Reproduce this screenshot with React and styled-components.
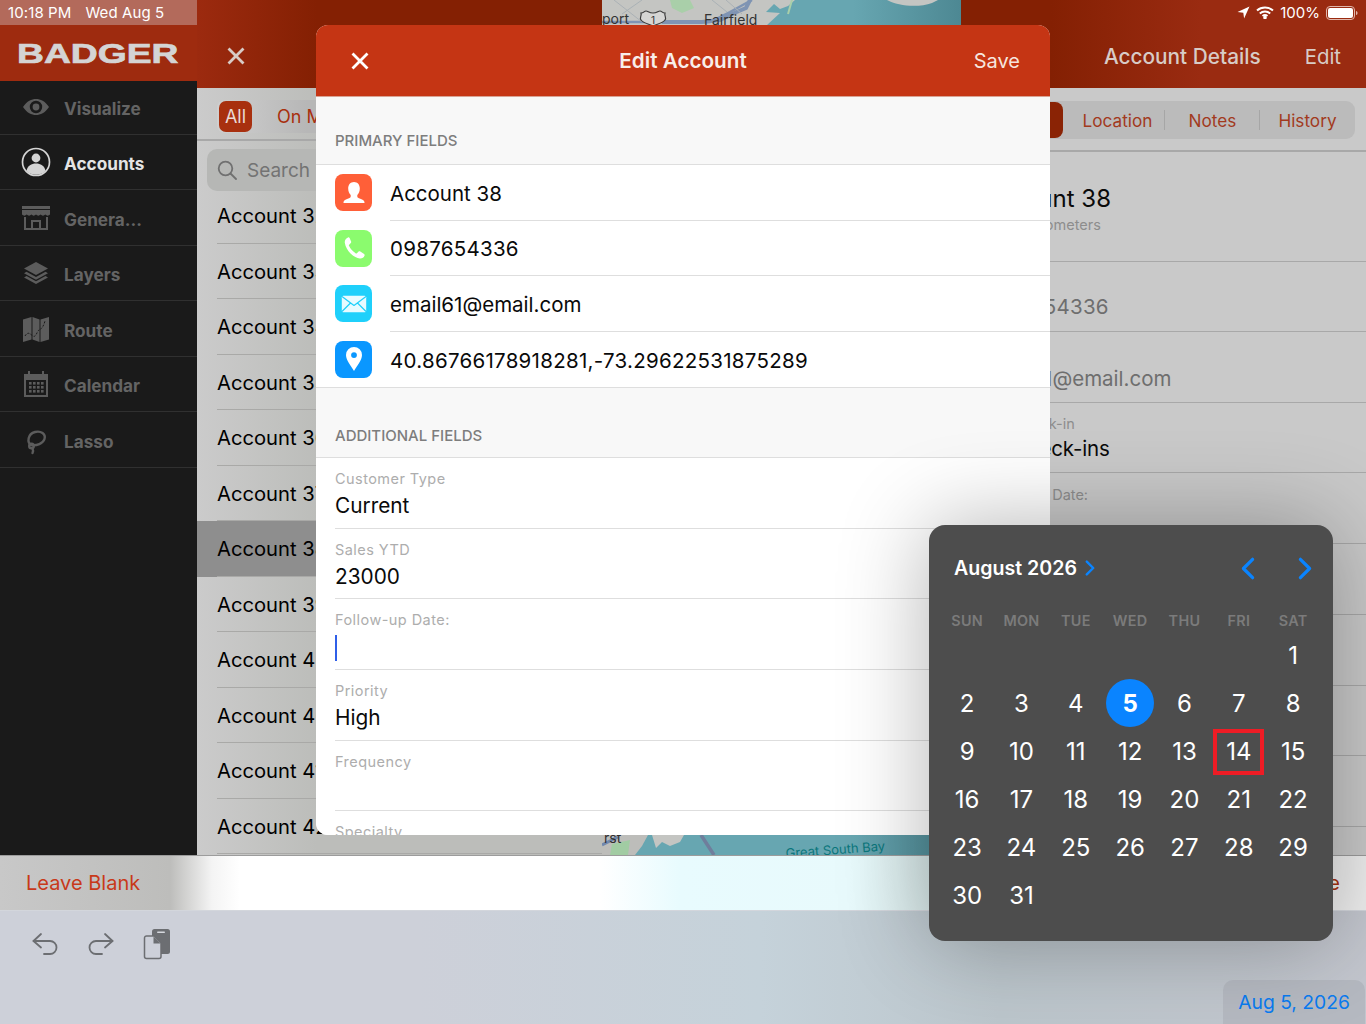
import React from "react";
import styled, { createGlobalStyle } from "styled-components";

const Global = createGlobalStyle`
  html, body { margin: 0; padding: 0; background: #cdd0d9; }
  * { box-sizing: border-box; }
  body { font-family: Inter, "Noto Sans", "Liberation Sans", sans-serif; -webkit-font-smoothing: antialiased; }
`;

const Page = styled.div`
  position: relative; width: 1366px; height: 1024px; overflow: hidden;
  display: flex; flex-direction: column;
`;
const TopRow = styled.div`display: flex; height: 855px; flex: none;`;

/* Sidebar */
const Sidebar = styled.aside`
  width: 197px; flex: none; background: #1a1a1a; display: flex; flex-direction: column;
`;
const StatusTint = styled.div`
  height: 25px; background: #b36a5b; color: #fff; font-size: 15px; letter-spacing: .1px;
  display: flex; align-items: center; padding-left: 8px; gap: 14px; white-space: nowrap;
`;
const LogoBar = styled.div`
  height: 56px; background: #9e2b0f; display: flex; align-items: center; justify-content: flex-start; padding-left: 17px;
  position: relative; z-index: 1; margin-bottom: -1.8px;
`;
const Logo = styled.span`
  display: inline-block; font-family: "Liberation Sans", Arial, sans-serif; font-weight: 700;
  font-size: 28px; line-height: 1; color: #d4d4d4; transform: scaleX(1.33); transform-origin: left center;
  -webkit-text-stroke: .7px #d4d4d4; margin-top: 2px;
`;
const SideItem = styled.div`
  height: 55.5px; display: flex; align-items: center; padding: 4px 0 0 21px; gap: 13px;
  border-bottom: 1px solid #303030;
  color: ${p => (p.$active ? "#e4e4e4" : "#646464")};
  font-size: 17.2px; font-weight: 700;
`;
const SideIcon = styled.svg`width: 30px; height: 30px; flex: none; margin-top: -3px;`;

/* Shared nav */
const ListCol = styled.section`width: 405px; flex: none; display: flex; flex-direction: column; background: linear-gradient(to right, #cbcbcb 0, #bcbdba 120px);`;
const DetailCol = styled.section`width: 405px; flex: none; display: flex; flex-direction: column; background: #c9c9c9;`;
const Nav = styled.div`
  height: 88px; flex: none; display: flex; flex-direction: column;
  background: ${p => p.$bg};
`;
const StatusRow = styled.div`
  height: 25px; display: flex; align-items: center; justify-content: flex-end;
  padding-right: 8px; gap: 6px; color: #fff; font-size: 15px;
`;
const TitleRow = styled.div`
  flex: 1; display: flex; align-items: center; color: #d8cbc6; font-size: 20.8px; font-weight: 500;
  padding: 0 25px 1px 29px;
  justify-content: ${p => (p.$end ? "flex-end" : "flex-start")};
  gap: 44px;
`;
const EditLink = styled.span`font-weight: 400; font-size: 20.4px;`;
const CloseBtn = styled.svg`width: 20px; height: 20px; flex: none;`;

/* List column */
const SegBand = styled.div`
  height: 53px; flex: none; border-bottom: 2px solid #a8a8a8; padding: 12px 0 0 20px;
`;
const ListSeg = styled.div`
  height: 33px; display: flex; align-items: center; gap: 25px; padding-left: 2px;
  background: linear-gradient(to right, #cfcfcf, #b7b7b7 90px); border-radius: 8px;
`;
const AllPill = styled.span`
  width: 33px; height: 31px; background: #a8300f; color: #ead9d4; border-radius: 7px; font-size: 18px;
  display: flex; align-items: center; justify-content: center;
`;
const SegText = styled.span`color: #a8300f; font-size: 18px; white-space: nowrap;`;
const Search = styled.div`
  height: 42px; margin: 8px 0 -3px 10px; background: #b6b7b5; border-radius: 10px; flex: none;
  display: flex; align-items: center; gap: 10px; padding-left: 10px; color: #737373; font-size: 19px; position: relative;
`;
const ListRow = styled.div`
  height: 55.5px; flex: none; padding-left: 20px; position: relative;
  background: ${p => (p.$selected ? "#8e8e8e" : "transparent")};
`;
const ListRowInner = styled.div`
  height: 100%; display: flex; align-items: center; border-bottom: 1px solid #a9a9a7; padding-top: 1px;
  color: #000; font-size: 20.2px; white-space: nowrap;
`;

/* Map */
const MapCol = styled.div`width: 359px; flex: none; background: #5f9faa;`;
const MapSvg = styled.svg`display: block; width: 359px; height: 855px;`;

/* Detail column */
const DetailSegBand = styled.div`
  height: 64px; flex: none; border-bottom: 2px solid #a8a8a8; padding: 13px 11px 0 14px;
`;
const DetailSeg = styled.div`
  height: 38px; display: flex; background: #bbbbbb; border-radius: 9px;
`;
const DetailSegItem = styled.div`
  width: 95px; flex: none; display: flex; align-items: center; justify-content: ${p => (p.$sel ? "flex-start" : "center")}; position: relative;
  font-size: 17.2px; color: ${p => (p.$sel ? "#e0c9c2" : "#a23a1e")};
`;
const DetailSelPill = styled.span`
  width: 88px; height: 36px; background: #8a2305; border-radius: 8px;
  display: flex; align-items: center; justify-content: center;
`;
const SegDivider = styled.span`
  position: absolute; right: 0; top: 9px; width: 1px; height: 20px; background: #a6a6a6;
`;
const DetailBody = styled.div`display: flex; flex-direction: column; flex: 1;`;
const DetailRow = styled.div`
  height: ${p => p.$h}px; flex: none; padding-left: 19px; border-bottom: 1px solid #a8a8a8;
  display: flex; flex-direction: column; justify-content: flex-start;
  padding-top: ${p => p.$pt || 0}px; white-space: nowrap;
`;
const DetailTitle = styled.div`font-size: 24px; color: #0a0a0a; line-height: 30px;`;
const DetailSub = styled.div`font-size: 14.5px; color: #8d8d8d; line-height: 18px; margin-top: ${p => p.$mt || 0}px;`;
const DetailValue = styled.div`
  font-size: 20.5px; line-height: 28px; margin-top: ${p => p.$mt || 0}px;
  letter-spacing: ${p => (p.$num ? ".28px" : p.$dark ? "-.2px" : "0")};
  color: ${p => (p.$dark ? "#0a0a0a" : "#6e6e6e")};
`;

/* Bottom */
const AccessoryBar = styled.div`
  height: 55px; flex: none; display: flex; align-items: center; justify-content: space-between; padding: 0 26px;
  background: linear-gradient(to right, #c8c8c8 0, #bdbdbb 170px, #f4f4f4 212px, #fff 240px, #fff 600px, #e8fbfe 680px, #e8fafc 850px, #d8e8e8 930px, #eeeeee 1340px);
  border-top: 1px solid #9c9c9c; font-size: 20px; color: #c8391a;
`;
const EndAction = styled.span`color: #a8300f;`;
const KeyTray = styled.div`
  flex: 1; display: flex; flex-direction: column;
  background: linear-gradient(to right, #cdd0d9 0, #cdd0d9 420px, #c5d2da 760px, #bcc6cc 1000px, #c3c6ce 1366px);
  border-top: 1px solid #d3d6dc;
`;
const Tools = styled.div`display: flex; align-items: center; gap: 28px; padding: 17px 0 0 31px;`;
const ToolIcon = styled.svg`display: block; flex: none;`;
const DatePill = styled.div`
  margin-top: auto; align-self: flex-end; width: 142px; height: 44px; margin-right: 1px;
  background: #b5b9c1; border-radius: 10px 10px 0 0; color: #0a7bf0; font-size: 19.3px;
  display: flex; align-items: center; justify-content: flex-end; padding-right: 15px;
`;

/* Modal */
const Modal = styled.div`
  position: absolute; left: 316px; top: 25px; width: 734px; height: 810px;
  border-radius: 12px; overflow: hidden; background: #f8f8f8; display: flex; flex-direction: column;
`;
const ModalNav = styled.div`
  height: 72px; flex: none; background: #c53514; display: flex; align-items: center; justify-content: space-between;
  padding: 0 30px 0 34px; color: #fff; position: relative; font-size: 20px; border-bottom: 1px solid #d9a394;
`;
const ModalTitle = styled.div`
  position: absolute; left: 0; right: 0; text-align: center; font-weight: 600; font-size: 20.7px; color: #f8eeea;
`;
const SaveText = styled.span`color: #f6e5df;`;
const SectionHead = styled.div`
  height: ${p => p.$h}px; flex: none; display: flex; align-items: flex-end; padding: 0 0 ${p => p.$pb}px 19px;
  color: #7d7d7d; font-size: 15px; font-weight: 500; border-bottom: 1px solid #dedede; line-height: 18px;
`;
const WhiteGroup = styled.div`background: #fff; border-bottom: ${p => p.$b ? "1px solid #dedede" : "none"}; flex: none;`;
const PrimaryRow = styled.div`
  height: 55.5px; display: flex; align-items: center; padding-left: 19px; gap: 18px;
`;
const IconTile = styled.div`
  width: 37px; height: 37px; flex: none; border-radius: 8px; background: ${p => p.$c};
  display: flex; align-items: center; justify-content: center;
`;
const PrimaryText = styled.div`
  flex: 1; height: 100%; display: flex; align-items: center; font-size: 20.5px; color: #0a0a0a; padding-top: 2px;
  letter-spacing: ${p => (p.$num ? ".28px" : "0")};
  border-bottom: ${p => (p.$last ? "none" : "1px solid #dedede")};
`;
const FormRow = styled.div`
  height: 70.7px; margin-left: 19px; border-bottom: 1px solid #dedede; padding-top: 12px;
`;
const FormLabel = styled.div`font-size: 14.5px; line-height: 18px; color: #adadad; letter-spacing: .45px;`;
const FormValue = styled.div`font-size: 20.8px; line-height: 28px; height: 28px; margin-top: 4px; color: #0a0a0a; display: flex; align-items: center;`;
const Caret = styled.span`display: block; width: 2px; height: 26px; background: #2f5fe8; margin-top: 2px;`;

/* Calendar */
const Popover = styled.div`
  position: absolute; left: 929px; top: 525px; width: 404px; height: 416px; border-radius: 16px;
  background: #4d4d4d; color: #fff; box-shadow: 0 0 90px rgba(0,0,0,.3);
  padding: 27px 11px 0;
`;
const CalHead = styled.div`
  height: 32px; display: flex; align-items: center; padding: 0 10px 0 14px; font-size: 19.6px; font-weight: 600; gap: 8px;
`;
const CalArrows = styled.div`margin-left: auto; display: flex; gap: 43px; align-items: center;`;
const Chevron = styled.svg`display: block; flex: none;`;
const WeekRow = styled.div`
  display: grid; grid-template-columns: repeat(7, 54.33px); margin-top: 27px; height: 20px;
  color: #7b7b7b; font-size: 14.4px; font-weight: 600; text-align: center; line-height: 20px; letter-spacing: .3px;
`;
const DaysGrid = styled.div`
  display: grid; grid-template-columns: repeat(7, 54.33px); grid-auto-rows: 48px; margin-top: 0;
`;
const DayCell = styled.div`
  display: flex; align-items: center; justify-content: center; font-size: 24px; position: relative;
  font-weight: ${p => (p.$today ? 700 : 400)};
`;
const TodayDisc = styled.span`
  width: 48px; height: 48px; border-radius: 50%; background: #0a84ff; display: flex; align-items: center; justify-content: center;
`;
const MarkBox = styled.span`
  position: absolute; left: 1px; top: 2px; width: 51px; height: 46px; border: 4px solid #ee1c25;
`;

const Sw = ({ children }) => (
  <SideIcon viewBox="0 0 30 30" fill="#5c5c5c">{children}</SideIcon>
);

const icons = {
  eye: (
    <Sw>
      <path fillRule="evenodd" d="M2 15C6 9 10.500 7 15 7s9 2 13 8c-4 6-8.500 8-13 8S6 21 2 15Zm13-6.200a6.200 6.200 0 1 0 0 12.400 6.200 6.200 0 0 0 0-12.400Z" />
      <circle cx="15" cy="15" r="3.400" />
    </Sw>
  ),
  person: (
    <SideIcon viewBox="0 0 30 30">
      <circle cx="15" cy="15" r="13.500" fill="none" stroke="#d4d4d4" strokeWidth="1.700" />
      <circle cx="15" cy="11" r="4.400" fill="#d4d4d4" />
      <path d="M5.500 24c1-5.500 5-7.500 9.500-7.500s8.500 2 9.500 7.500c-2.500 2.500-6 3.700-9.500 3.700S8 26.500 5.500 24Z" fill="#d4d4d4" />
    </SideIcon>
  ),
  store: (
    <Sw>
      <rect x="1" y="3" width="28" height="3" />
      <path d="M1 7h28v4.500c-1.500 1.500-3.200 1.500-4.700 0-1.500 1.500-3.200 1.500-4.700 0-1.500 1.500-3.100 1.500-4.600 0-1.500 1.500-3.100 1.500-4.600 0-1.500 1.500-3.200 1.500-4.700 0-1.500 1.500-3.200 1.500-4.700 0Z" />
      <path fillRule="evenodd" d="M3 14h2v11h5v-8h10v8h5V14h2v13H3Zm9 5v6h6v-6Z" />
    </Sw>
  ),
  layers: (
    <Sw>
      <path d="M15 4 27 10.500 15 17 3 10.500Z" />
      <path d="M5.500 13.800 3 15.200 15 21.700 27 15.200 24.500 13.800 15 19Z" />
      <path d="M5.500 18 3 19.400 15 26 27 19.400 24.500 18 15 23.200Z" />
    </Sw>
  ),
  route: (
    <Sw>
      <path d="M2 5.500 10.500 3v22.500L2 28Z" />
      <path d="M11.500 3 18.500 5.500v22.500l-7-2.500Z" />
      <path d="M19.500 5.500 28 3v22.500L19.500 28Z" />
      <path d="M4 22c3-5 5-2 8 0s4-5 6-6 4-2 6-9" fill="none" stroke="#1a1a1a" strokeWidth="1" strokeDasharray="2 1.500" />
    </Sw>
  ),
  calendar: (
    <Sw>
      <path fillRule="evenodd" d="M3 5h4V2h2v3h12V2h2v3h4v23H3Zm2 6v15h20V11Z" />
      {[0, 1, 2, 3].flatMap(c => [0, 1, 2].map(r => (
        <rect key={`${c}${r}`} x={8 + c * 4} y={13 + r * 4} width="2.600" height="2.600" />
      )))}
    </Sw>
  ),
  lasso: (
    <SideIcon viewBox="0 0 30 30" fill="none" stroke="#5c5c5c" strokeWidth="2.400" strokeLinecap="round">
      <path d="M10 20C6 17.500 6.500 9 14 7c6-1.500 11 2 9.500 7-1.300 4.500-8 7-13.500 6" />
      <circle cx="10.500" cy="21" r="2.300" />
      <path d="M11.500 23.500c1 2 .5 3.500 0 4.500" />
    </SideIcon>
  ),
};

const sideItems = [
  ["Visualize", "eye"], ["Accounts", "person", true], ["Genera...", "store"], ["Layers", "layers"],
  ["Route", "route"], ["Calendar", "calendar"], ["Lasso", "lasso"],
];
const accounts = ["32", "33", "34", "35", "36", "37", "38", "39", "4", "40", "41", "42"];
const weekdays = ["SUN", "MON", "TUE", "WED", "THU", "FRI", "SAT"];
const days = Array.from({ length: 31 }, (_, i) => i + 1);

const X = ({ c }) => (
  <CloseBtn viewBox="0 0 20 20" fill="none" stroke={c} strokeWidth="2.800" strokeLinecap="square">
    <path d="M3.500 3.500 16.500 16.500M16.500 3.500 3.500 16.500" />
  </CloseBtn>
);

const Chev = ({ dir, w, h, sw }) => (
  <Chevron width={w} height={h} viewBox="0 0 12 20" fill="none" stroke="#0a84ff" strokeWidth={sw} strokeLinecap="round" strokeLinejoin="round">
    <path d={dir === "l" ? "M10 2 2 10l8 8" : "M2 2l8 8-8 8"} />
  </Chevron>
);

const MapArt = () => (
  <MapSvg viewBox="0 0 359 855">
    <defs>
      <linearGradient id="edge" x1="0" x2="1" y1="0" y2="0">
        <stop offset="0" stopColor="#67a6b1" />
        <stop offset=".7" stopColor="#67a6b1" />
        <stop offset="1" stopColor="#4d8893" />
      </linearGradient>
    </defs>
    <rect width="359" height="855" fill="url(#edge)" />
    {/* north shore */}
    <path d="M0 0H193L186 6 178 9 172 4 164 12 178 13 165 25H0Z" fill="#c4c5c2" />
    <path d="M68 0H88L92 8 80 13 70 8Z" fill="#a9cfa9" />
    <path d="M148 0 144 8 130 14 118 20 100 22 60 22" fill="none" stroke="#7f94b3" strokeWidth="4" />
    <path d="M0 22H108L128 12 150 0" fill="none" stroke="#7f94b3" strokeWidth="2.500" />
    <path d="M12 0 40 22M40 0 20 14M110 0 125 12M124 0 140 14" fill="none" stroke="#aab1b5" strokeWidth="1" />
    <path d="M190 0 186 14" stroke="#a9cfa9" strokeWidth="2" />
    <path d="M285 0C296 6 316 8 330 3 L336 0Z" fill="#c4c5c2" />
    <path d="M39 20c-2-2 1-4 0-7 3 0 3-2 5-2s3 2 7 2 5-2 7-2 2 2 5 2c-1 3 2 5 0 7-2 3-8 4-12 6-4-2-10-3-12-6Z" fill="#d6d6d4" stroke="#3c3c3c" strokeWidth="1.200" />
    <text x="51" y="24" fontSize="10" fontFamily="Inter, sans-serif" fill="#333" textAnchor="middle">1</text>
    <text x="0" y="24" fontSize="14" fontFamily="Inter, sans-serif" fill="#333">port</text>
    <text x="102" y="25" fontSize="14" fontFamily="Inter, sans-serif" fill="#333">Fairfield</text>
    {/* south shore */}
    <path d="M0 835H46L40 846 33 855H0Z" fill="#bdbdba" />
    <path d="M10 844 28 840 26 855H8Z" fill="#a1cca3" />
    <path d="M50 835 H82 L78 842 68 846 60 842 54 848Z" fill="#c4c5c2" />
    <path d="M0 845 16 837" stroke="#6f87ad" strokeWidth="3" />
    <path d="M99 835 112 855" stroke="#6f7e9c" strokeWidth="3.500" />
    <text x="2" y="843" fontSize="14" fontFamily="Inter, sans-serif" fill="#2f2f2f">rst</text>
    <text x="184" y="858" fontSize="13" fontFamily="Inter, sans-serif" fill="#0b767c" transform="rotate(-4.300 184 858)">Great South Bay</text>
  </MapSvg>
);

export default function App() {
  return (
    <Page>
      <Global />
      <TopRow>
        <Sidebar>
          <StatusTint><span>10:18 PM</span><span>Wed Aug 5</span></StatusTint>
          <LogoBar><Logo>BADGER</Logo></LogoBar>
          {sideItems.map(([label, ic, active]) => (
            <SideItem key={label} $active={active}>{icons[ic]}<span>{label}</span></SideItem>
          ))}
        </Sidebar>

        <ListCol>
          <Nav $bg="linear-gradient(to right, #9c2a0f 0, #842003 120px)">
            <StatusRow />
            <TitleRow><X c="#d8cbc6" /></TitleRow>
          </Nav>
          <SegBand>
            <ListSeg><AllPill>All</AllPill><SegText>On Map</SegText></ListSeg>
          </SegBand>
          <Search>
            <svg width="20" height="20" viewBox="0 0 20 20" fill="none" stroke="#707070" strokeWidth="1.800" strokeLinecap="round">
              <circle cx="8.500" cy="8.500" r="6.800" /><path d="M13.500 13.500 19 19" />
            </svg>
            <span>Search</span>
          </Search>
          {accounts.map(n => (
            <ListRow key={n} $selected={n === "38"}>
              <ListRowInner>Account {n}</ListRowInner>
            </ListRow>
          ))}
        </ListCol>

        <MapCol><MapArt /></MapCol>

        <DetailCol>
          <Nav $bg="linear-gradient(to right, #842003 0, #842003 90px, #9a2b11 240px)">
            <StatusRow>
              <svg width="13" height="13" viewBox="0 0 13 13" fill="#fff"><path d="M12.500.500 .500 6l5.800.8.800 5.700Z" /></svg>
              <svg width="18" height="13" viewBox="0 0 18 13" fill="none" stroke="#fff" strokeWidth="2">
                <path d="M1 4.500C5.500.500 12.500.500 17 4.500" /><path d="M3.800 7.400c3-2.600 7.400-2.600 10.400 0" /><path d="M6.500 10c1.500-1.200 3.500-1.200 5 0" />
                <circle cx="9" cy="11.500" r=".8" fill="#fff" />
              </svg>
              <span>100%</span>
              <svg width="32" height="14" viewBox="0 0 32 14">
                <rect x=".5" y=".5" width="28" height="13" rx="3.500" fill="none" stroke="#e0b6ab" />
                <rect x="2" y="2" width="25" height="10" rx="2" fill="#fff" />
                <path d="M30 5v4c1 0 1.500-1 1.500-2s-.5-2-1.500-2Z" fill="#e0b6ab" />
              </svg>
            </StatusRow>
            <TitleRow $end><span>Account Details</span><EditLink>Edit</EditLink></TitleRow>
          </Nav>
          <DetailSegBand>
            <DetailSeg>
              <DetailSegItem $sel><DetailSelPill>Details</DetailSelPill></DetailSegItem>
              <DetailSegItem>Location<SegDivider /></DetailSegItem>
              <DetailSegItem>Notes<SegDivider /></DetailSegItem>
              <DetailSegItem>History</DetailSegItem>
            </DetailSeg>
          </DetailSegBand>
          <DetailBody>
            <DetailRow $h={109.5} $pt={32}>
              <DetailTitle>Account 38</DetailTitle>
              <DetailSub $mt={2}>123.45 kilometers</DetailSub>
            </DetailRow>
            <DetailRow $h={70} $pt={31}><DetailValue $num>0987654336</DetailValue></DetailRow>
            <DetailRow $h={71} $pt={33}><DetailValue>email61@email.com</DetailValue></DetailRow>
            <DetailRow $h={70} $pt={12}>
              <DetailSub>Last Check-in</DetailSub>
              <DetailValue $dark $mt={2}>No Check-ins</DetailValue>
            </DetailRow>
            <DetailRow $h={71} $pt={13}><DetailSub>Follow-up Date:</DetailSub></DetailRow>
            <DetailRow $h={71} />
            <DetailRow $h={71} />
            <DetailRow $h={70} />
            <DetailRow $h={71} />
          </DetailBody>
        </DetailCol>
      </TopRow>

      <AccessoryBar><span>Leave Blank</span><EndAction>Done</EndAction></AccessoryBar>
      <KeyTray>
        <Tools>
          <ToolIcon width="28" height="28" viewBox="0 0 28 28" fill="none" stroke="#6c6e72" strokeWidth="1.800" strokeLinecap="round" strokeLinejoin="round">
            <path d="M10 4 2.500 11l7.500 6.500" /><path d="M2.500 11H19a6.500 6.500 0 0 1 0 13h-6" />
          </ToolIcon>
          <ToolIcon width="28" height="28" viewBox="0 0 28 28" fill="none" stroke="#6c6e72" strokeWidth="1.800" strokeLinecap="round" strokeLinejoin="round">
            <path d="M18 4l7.500 7L18 17.500" /><path d="M25.500 11H9a6.500 6.500 0 0 0 0 13h6" />
          </ToolIcon>
          <ToolIcon width="28" height="32" viewBox="0 0 28 32">
            <rect x="9" y="1" width="18" height="25" rx="2.500" fill="#6c6e72" />
            <rect x="14" y="3.500" width="8" height="1.600" rx=".8" fill="#d6d8de" />
            <path d="M3.500 8H11l7 7v13.500a2 2 0 0 1-2 2H3.500a2 2 0 0 1-2-2V10a2 2 0 0 1 2-2Z" fill="#cdd0d9" stroke="#6c6e72" strokeWidth="1.500" />
            <path d="M10.500 8.500v7h7Z" fill="#6c6e72" />
          </ToolIcon>
        </Tools>
        <DatePill>Aug 5, 2026</DatePill>
      </KeyTray>

      <Modal>
        <ModalNav>
          <X c="#fff" />
          <ModalTitle>Edit Account</ModalTitle>
          <SaveText>Save</SaveText>
        </ModalNav>
        <SectionHead $h={68} $pb={14}>PRIMARY FIELDS</SectionHead>
        <WhiteGroup $b>
          <PrimaryRow>
            <IconTile $c="#ff5f38">
              <svg width="28" height="28" viewBox="0 0 28 28" fill="#fff">
                <path d="M14 3c3.600 0 5.800 2.800 5.800 6.500 0 2.700-1 5-2.500 6.400v1.500c0 1 1 1.700 3 2.400 2.600 1 4.200 2 4.200 3.700v.5H3.500v-.5c0-1.700 1.600-2.700 4.200-3.700 2-.7 3-1.400 3-2.400v-1.500C9.200 14.500 8.200 12.200 8.200 9.500 8.200 5.800 10.400 3 14 3Z" />
              </svg>
            </IconTile>
            <PrimaryText>Account 38</PrimaryText>
          </PrimaryRow>
          <PrimaryRow>
            <IconTile $c="#8bfb6e">
              <svg width="28" height="28" viewBox="0 0 28 28" fill="#fff">
                <path d="M8 3.500c-2 .8-3.500 2.700-3.200 5.200.5 4 3 8 5.700 10.800 2.800 2.700 6.300 4.800 9.300 5 2.300.2 3.900-1 4.700-2.800.3-.6.100-1.200-.4-1.600l-3.800-2.700c-.6-.4-1.200-.3-1.700.2l-1.700 1.700c-.3.300-.7.300-1 .1-1.500-.9-3-2.200-4.100-3.400-1.100-1.200-2.200-2.900-2.800-4.300-.2-.4-.1-.8.200-1l1.600-1.600c.5-.5.6-1.200.2-1.800L9.600 4c-.4-.6-1-.8-1.600-.5Z" />
              </svg>
            </IconTile>
            <PrimaryText $num>0987654336</PrimaryText>
          </PrimaryRow>
          <PrimaryRow>
            <IconTile $c="#1fd0fb">
              <svg width="26" height="18" viewBox="0 0 26 18" fill="none" stroke="#fff" strokeWidth="1.200" strokeLinejoin="round">
                <rect x=".8" y=".8" width="24.400" height="16.400" rx="1.500" fill="#e8fbff" stroke="none" />
                <path d="M1 1.500 13 10.500 25 1.500M1 16.500 9.500 8M25 16.500 16.500 8" stroke="#1fd0fb" />
              </svg>
            </IconTile>
            <PrimaryText>email61@email.com</PrimaryText>
          </PrimaryRow>
          <PrimaryRow>
            <IconTile $c="#0a97ff">
              <svg width="18" height="26" viewBox="0 0 18 26">
                <path fillRule="evenodd" d="M9 1a8 8 0 0 1 8 8c0 5.200-5 11-8 16-3-5-8-10.800-8-16a8 8 0 0 1 8-8Zm0 5.200a2.900 2.900 0 1 0 0 5.800 2.900 2.900 0 0 0 0-5.800Z" fill="#fff" />
              </svg>
            </IconTile>
            <PrimaryText $last $num>40.86766178918281,-73.29622531875289</PrimaryText>
          </PrimaryRow>
        </WhiteGroup>
        <SectionHead $h={70} $pb={12}>ADDITIONAL FIELDS</SectionHead>
        <WhiteGroup>
          <FormRow><FormLabel>Customer Type</FormLabel><FormValue>Current</FormValue></FormRow>
          <FormRow><FormLabel>Sales YTD</FormLabel><FormValue>23000</FormValue></FormRow>
          <FormRow><FormLabel>Follow-up Date:</FormLabel><FormValue><Caret /></FormValue></FormRow>
          <FormRow><FormLabel>Priority</FormLabel><FormValue>High</FormValue></FormRow>
          <FormRow><FormLabel>Frequency</FormLabel><FormValue /></FormRow>
          <FormRow><FormLabel>Specialty</FormLabel></FormRow>
        </WhiteGroup>
      </Modal>

      <Popover>
        <CalHead>
          <span>August 2026</span>
          <Chev dir="r" w={10} h={16} sw={3} />
          <CalArrows>
            <Chev dir="l" w={14} h={23} sw={2.800} />
            <Chev dir="r" w={14} h={23} sw={2.800} />
          </CalArrows>
        </CalHead>
        <WeekRow>{weekdays.map(d => <span key={d}>{d}</span>)}</WeekRow>
        <DaysGrid>
          {Array.from({ length: 6 }, (_, i) => <DayCell key={`b${i}`} />)}
          {days.map(d => (
            <DayCell key={d} $today={d === 5}>
              {d === 5 ? <TodayDisc>5</TodayDisc> : d}
              {d === 14 && <MarkBox />}
            </DayCell>
          ))}
        </DaysGrid>
      </Popover>
    </Page>
  );
}
